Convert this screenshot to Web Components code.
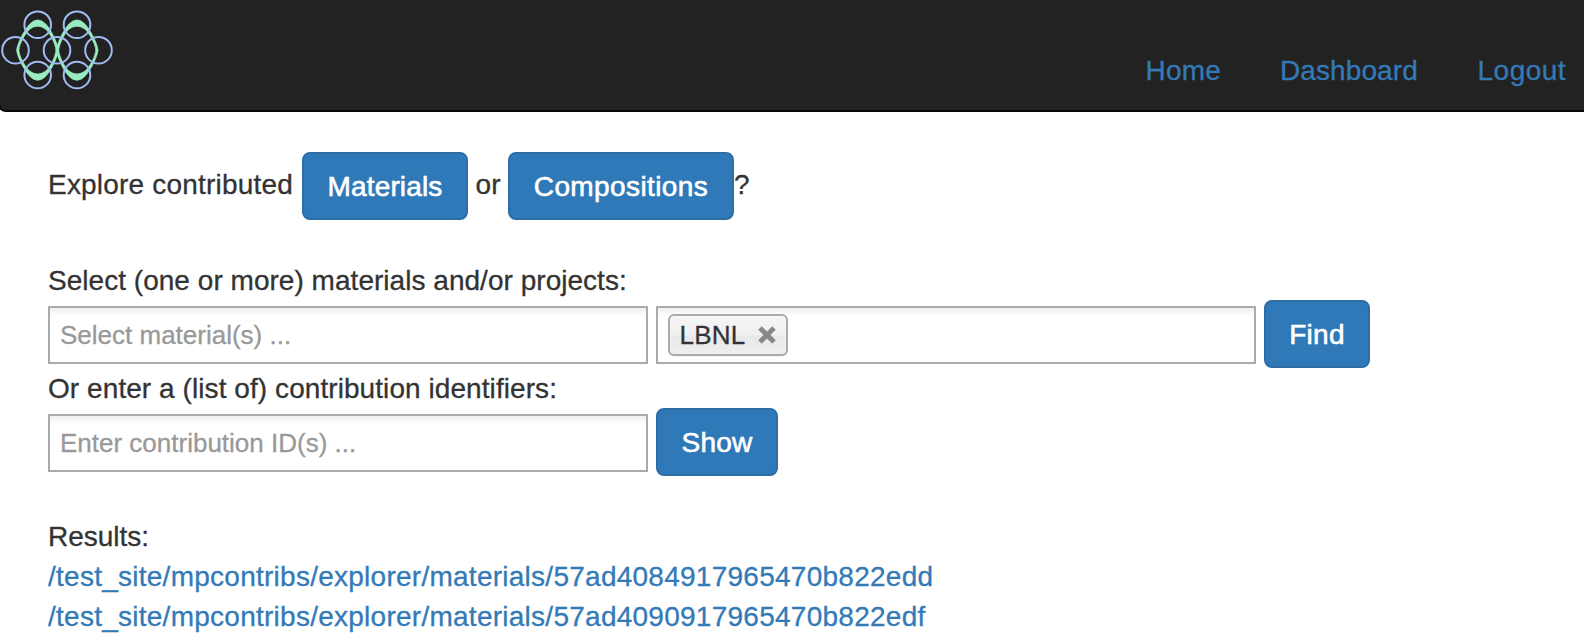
<!DOCTYPE html>
<html lang="en">
<head>
<meta charset="utf-8">
<title>MPContribs Explorer</title>
<style>
html,body{margin:0;background:#fff}
body{font:28px/40px "Liberation Sans",Arial,sans-serif;color:#333;overflow:hidden;height:644px;-webkit-text-stroke-width:.3px}
</style>
</head>
<body>
<explorer-page></explorer-page>
<script>
class Base extends HTMLElement{
  connectedCallback(){
    if(this.shadowRoot)return;
    this.attachShadow({mode:'open'}).innerHTML=this.view();
  }
}
customElements.define('site-logo',class extends Base{
  view(){
    const c=[[37.7,24.7],[77,24.7],[15.5,50.2],[57,50.2],[98.5,50.2],[37.7,75],[77,75]];
    const lobe='M16.6 50.2C17.5 43 24 30.5 29.5 24.2Q37.7 15.6 46 24.2C51.5 30.500 57 42 58.6 50.2C57 58.4 51.5 70 46 76Q37.7 84.6 29.5 76C24 70 17.5 57.4 16.6 50.2ZM18.9 50.2C19.5 57 25 66.5 29.6 71Q37.7 77 45.8 71C50.5 66.5 55.2 57 56 50.2C55.2 43.4 50.5 34 45.8 29.2Q37.7 23.2 29.6 29.2C25 34 19.5 43.4 18.9 50.2Z';
    return `<style>:host{display:block;width:116px;height:100px}svg{display:block}</style>
    <svg width="116" height="100" viewBox="0 0 116 100">
      <g fill="#98ecc0" stroke="#98ecc0" stroke-width=".7" fill-rule="evenodd">
        <path d="${lobe}"/><path transform="translate(114.7 0) scale(-1 1)" d="${lobe}"/>
      </g>
      <g fill="none" stroke="#a0bcf2" stroke-width="2">${c.map(([x,y])=>`<circle cx="${x}" cy="${y}" r="13.3"/>`).join('')}</g>
    </svg>`;
  }
});
customElements.define('nav-link',class extends Base{
  view(){return `<style>:host{display:block;flex:none}a{color:#337ab7;text-decoration:none;white-space:nowrap}</style><a><slot></slot></a>`}
});
customElements.define('site-nav',class extends Base{
  view(){return `<style>
    :host{display:block;overflow:hidden}
    header{display:flex;box-sizing:border-box;height:112px;margin-left:-2px;background:#222;border:solid #080808;border-width:0 0 2px 2px;border-radius:0 0 0 8px}
    nav{display:flex;margin-left:auto;padding-top:51px}
    .home{width:134.5px;letter-spacing:.25px}.dash{width:197.5px;letter-spacing:.1px}.out{width:106.500px;letter-spacing:.5px}
    </style><header><site-logo></site-logo><nav><nav-link class="home">Home</nav-link><nav-link class="dash">Dashboard</nav-link><nav-link class="out">Logout</nav-link></nav></header>`}
});
customElements.define('action-button',class extends Base{
  view(){return `<style>
    :host{display:block;flex:none}
    button{display:block;box-sizing:border-box;width:100%;height:68px;margin:0;padding:13px 0 11px;font:inherit;letter-spacing:inherit;color:#fff;-webkit-text-stroke:.6px #fff;background:#2f79b9;border:2px solid #2e6da4;border-radius:8px;text-align:center;white-space:nowrap}
    </style><button><slot></slot></button>`}
});
customElements.define('choice-box',class extends Base{
  view(){return `<style>
    :host{display:flex;align-items:flex-start;box-sizing:border-box;flex:none;width:600px;height:58px;margin-top:6px;padding:6px 10px;border:2px solid #aaa;background:linear-gradient(#eee 0,#fff 8px);font-size:26px;color:#999;white-space:nowrap}
    </style><slot></slot>`}
});
customElements.define('choice-tag',class extends Base{
  view(){return `<style>
    :host{display:flex;align-items:center;box-sizing:border-box;width:120px;height:42px;padding:0 10px 0 9.5px;border:2px solid #aaa;border-radius:6px;background:linear-gradient(#f4f4f4 20%,#f0f0f0 50%,#e8e8e8 52%,#eee 100%);box-shadow:inset 0 0 2px #fff,0 1px 1px rgba(0,0,0,.05);color:#333;letter-spacing:.2px}
    svg{margin-left:auto;display:block}
    </style><slot></slot><svg width="18" height="18" viewBox="0 0 18 18"><path d="M2 2L16 16M16 2L2 16" fill="none" stroke="#888" stroke-width="5"/></svg>`}
});
customElements.define('result-link',class extends Base{
  view(){return `<style>:host{display:block;box-sizing:border-box;height:40px;padding-top:1px;letter-spacing:.257px}a{color:#337ab7;text-decoration:none;white-space:nowrap}</style><a><slot></slot></a>`}
});
customElements.define('explorer-page',class extends Base{
  view(){return `<style>
    :host{display:block}
    main{padding:40px 48px 0}
    p{margin:0;height:40px;padding-top:1px;box-sizing:border-box;white-space:nowrap}
    .row{display:flex;height:68px}
    .ask span{padding-top:13px;flex:none;white-space:nowrap}
    .t1{width:254px;letter-spacing:.2px}
    .t2{width:32.5px;padding-left:7.5px;letter-spacing:.3px}
    .gap{column-gap:8px}
    .gt{margin-top:40px}
    .ph{padding-top:1px}
    </style>
    <site-nav></site-nav>
    <main>
      <div class="row ask"><span class="t1">Explore contributed</span><action-button style="width:166px;letter-spacing:.15px">Materials</action-button><span class="t2">or</span><action-button style="width:226px;letter-spacing:.4px">Compositions</action-button><span>?</span></div>
      <p class="gt" style="letter-spacing:.03px">Select (one or more) materials and/or projects:</p>
      <div class="row gap"><choice-box><span class="ph">Select material(s) ...</span></choice-box><choice-box><choice-tag>LBNL</choice-tag></choice-box><action-button style="width:106px;letter-spacing:.3px">Find</action-button></div>
      <p style="letter-spacing:.07px">Or enter a (list of) contribution identifiers:</p>
      <div class="row gap"><choice-box><span class="ph">Enter contribution ID(s) ...</span></choice-box><action-button style="width:122px;letter-spacing:.22px">Show</action-button></div>
      <p class="gt">Results:</p>
      <result-link>/test_site/mpcontribs/explorer/materials/57ad4084917965470b822edd</result-link>
      <result-link>/test_site/mpcontribs/explorer/materials/57ad4090917965470b822edf</result-link>
    </main>`}
});
</script>
</body>
</html>
